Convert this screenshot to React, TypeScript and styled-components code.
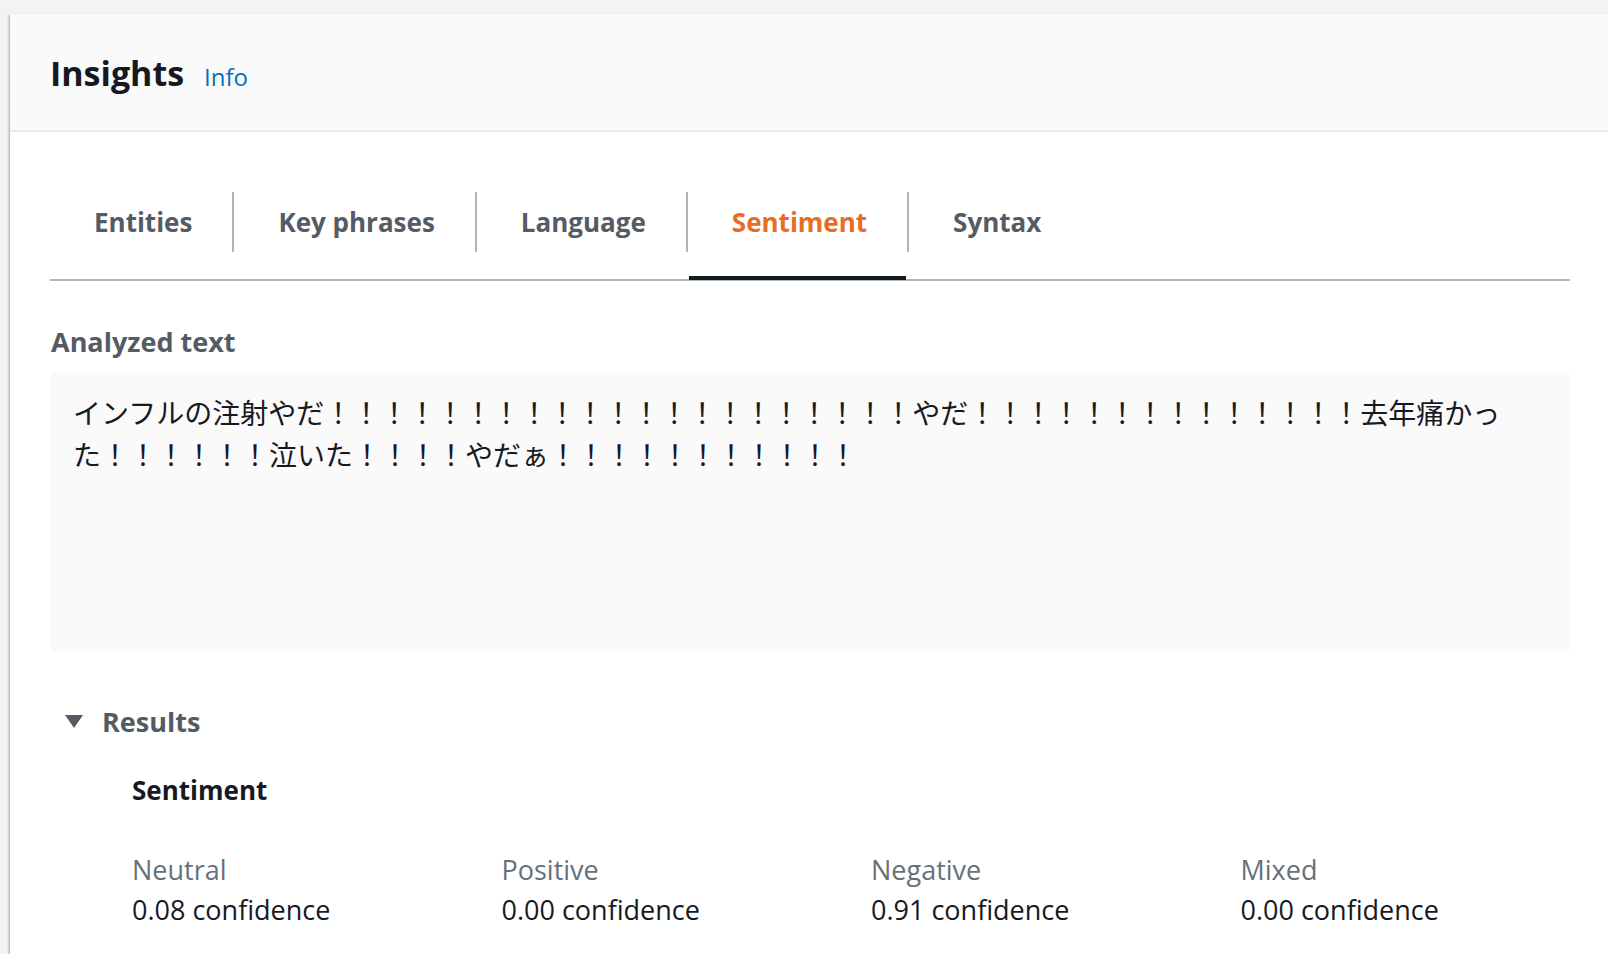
import React from 'react';
import styled, { createGlobalStyle } from 'styled-components';

const GlobalStyle = createGlobalStyle`
  html, body {
    margin: 0;
    padding: 0;
    background: #f2f3f3;
    overflow: hidden;
  }
  body {
    font-family: 'Open Sans', 'Noto Sans CJK JP', sans-serif;
    color: #16191f;
  }
  * { box-sizing: border-box; }
`;

const PageCss = styled.div`
  padding: 13px 0 0 10px;
  min-height: 954px;
`;

const CardCss = styled.div`
  width: 1600px;
  min-height: 960px;
  background: #ffffff;
  border-top: 1px solid #eaeded;
  box-shadow: 0 2px 2px rgba(0, 28, 36, 0.3), -2px 2px 2px rgba(0, 28, 36, 0.15);
`;

const HeaderCss = styled.div`
  height: 118px;
  display: flex;
  align-items: center;
  padding: 6px 40px 0;
  background: #fafafa;
  border-bottom: 2px solid #eaeded;
`;

const TitleCss = styled.h1`
  margin: 0;
  display: flex;
  align-items: baseline;
  gap: 20px;
  font-size: 34px;
  line-height: 44px;
  font-weight: 700;
  color: #16191f;
`;

const InfoLinkCss = styled.a`
  font-size: 24px;
  font-weight: 400;
  color: #0073bb;
  text-decoration: none;
`;

const BodyCss = styled.div`
  padding: 33px 40px 0;
`;

const TabListCss = styled.div`
  display: flex;
  align-items: center;
  border-bottom: 2px solid #aab7b8;
`;

const TabCss = styled.div<{ $active?: boolean }>`
  position: relative;
  height: 114px;
  display: flex;
  align-items: center;
  padding: 0 40px 0 44px;
  font-size: 26px;
  line-height: 36px;
  font-weight: 700;
  color: ${p => (p.$active ? '#e66d22' : '#545b64')};
  cursor: pointer;

  &::after {
    content: '';
    display: ${p => (p.$active ? 'block' : 'none')};
    position: absolute;
    left: 1px;
    right: 1px;
    bottom: -1px;
    height: 4px;
    background: #16191f;
  }
`;

const TabDividerCss = styled.span`
  width: 2px;
  height: 60px;
  background: #aab7b8;
`;

const LabelCss = styled.div`
  margin-top: 43px;
  font-size: 27px;
  line-height: 36px;
  font-weight: 700;
  color: #545b64;
  padding-left: 1px;
`;

const AnalyzedBoxCss = styled.div`
  margin: 12px 0 0 1px;
  height: 280px;
  padding: 19px 22px;
  background: #fafafa;
  font-family: 'Noto Sans CJK JP', sans-serif;
  font-size: 28px;
  line-height: 42px;
  color: #16191f;
`;

const ExpandHeaderCss = styled.div`
  margin-top: 52px;
  display: flex;
  align-items: center;
  gap: 19px;
  padding-left: 15px;
  font-size: 27px;
  line-height: 36px;
  font-weight: 700;
  color: #545b64;
`;

const ExpandContentCss = styled.div`
  padding-left: 82px;
`;

const SubHeadingCss = styled.h3`
  margin: 32px 0 0;
  font-size: 26px;
  line-height: 36px;
  font-weight: 700;
  color: #16191f;
`;

const ColumnsCss = styled.div`
  margin-top: 42px;
  display: grid;
  grid-template-columns: repeat(4, 1fr);
  column-gap: 40px;
`;

const KeyCss = styled.div`
  font-size: 27px;
  line-height: 40px;
  color: #687078;
`;

const ValueCss = styled.div`
  font-size: 27px;
  line-height: 40px;
  color: #16191f;
`;

const tabs = ['Entities', 'Key phrases', 'Language', 'Sentiment', 'Syntax'];

const scores = [
  { label: 'Neutral', value: '0.08' },
  { label: 'Positive', value: '0.00' },
  { label: 'Negative', value: '0.91' },
  { label: 'Mixed', value: '0.00' },
];

const analyzed =
  'インフルの注射やだ！！！！！！！！！！！！！！！！！！！！！やだ！！！！！！！！！！！！！！去年痛かった！！！！！！泣いた！！！！やだぁ！！！！！！！！！！！';

function CaretDown() {
  return (
    <svg width="18" height="14" viewBox="0 0 18 14">
      <polygon points="0,0 18,0 9,13" fill="#545b64" />
    </svg>
  );
}

export default function App() {
  return (
    <>
      <GlobalStyle />
      <PageCss>
        <CardCss>
          <HeaderCss>
            <TitleCss>
              Insights
              <InfoLinkCss href="#">Info</InfoLinkCss>
            </TitleCss>
          </HeaderCss>
          <BodyCss>
            <TabListCss>
              {tabs.map((tab, i) => (
                <React.Fragment key={tab}>
                  {i > 0 && <TabDividerCss />}
                  <TabCss $active={tab === 'Sentiment'}>{tab}</TabCss>
                </React.Fragment>
              ))}
            </TabListCss>
            <LabelCss>Analyzed text</LabelCss>
            <AnalyzedBoxCss>{analyzed}</AnalyzedBoxCss>
            <ExpandHeaderCss>
              <CaretDown />
              Results
            </ExpandHeaderCss>
            <ExpandContentCss>
              <SubHeadingCss>Sentiment</SubHeadingCss>
              <ColumnsCss>
                {scores.map(s => (
                  <div key={s.label}>
                    <KeyCss>{s.label}</KeyCss>
                    <ValueCss>{s.value} confidence</ValueCss>
                  </div>
                ))}
              </ColumnsCss>
            </ExpandContentCss>
          </BodyCss>
        </CardCss>
      </PageCss>
    </>
  );
}
